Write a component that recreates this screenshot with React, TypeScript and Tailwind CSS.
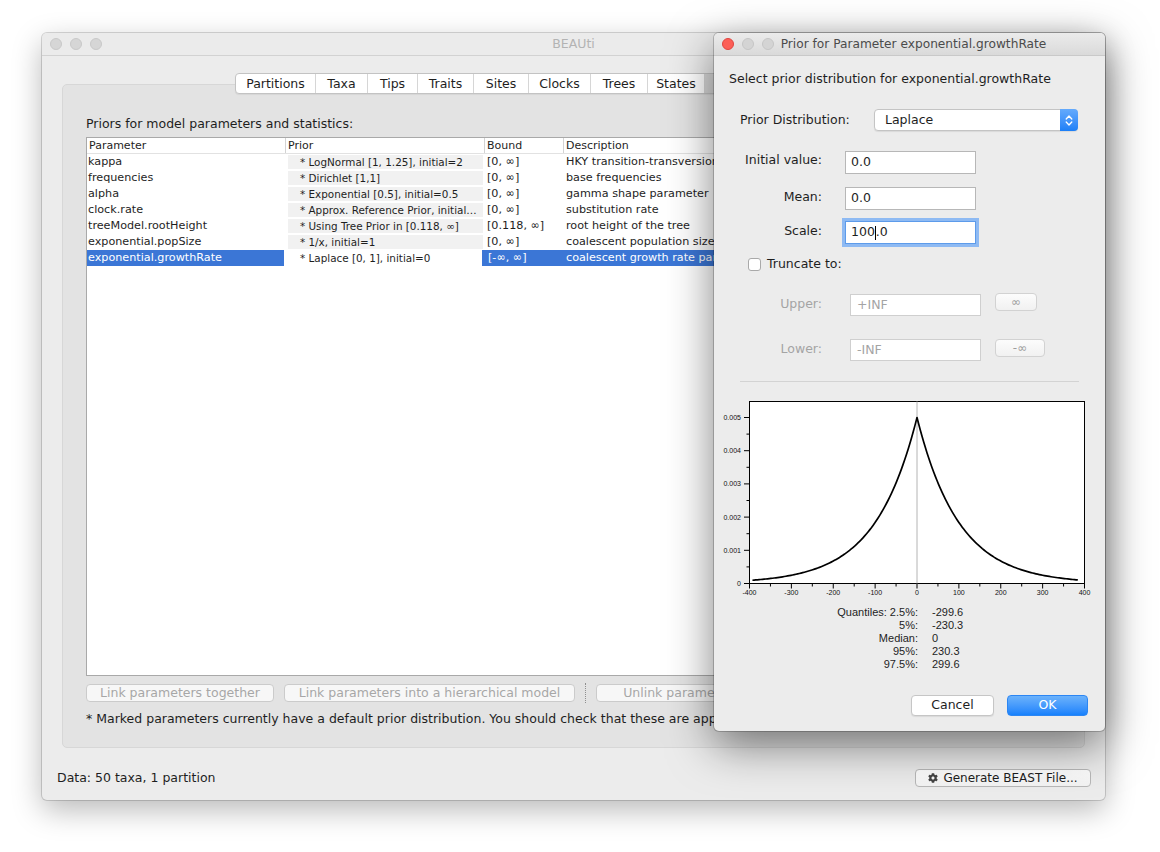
import React from "react";
import { FaCog } from "react-icons/fa";

const rows = [
  { p: "kappa", prior: "* LogNormal [1, 1.25], initial=2", b: "[0, ∞]", d: "HKY transition-transversion parameter" },
  { p: "frequencies", prior: "* Dirichlet [1,1]", b: "[0, ∞]", d: "base frequencies" },
  { p: "alpha", prior: "* Exponential [0.5], initial=0.5", b: "[0, ∞]", d: "gamma shape parameter" },
  { p: "clock.rate", prior: "* Approx. Reference Prior, initial=1", b: "[0, ∞]", d: "substitution rate" },
  { p: "treeModel.rootHeight", prior: "* Using Tree Prior in [0.118, ∞]", b: "[0.118, ∞]", d: "root height of the tree" },
  { p: "exponential.popSize", prior: "* 1/x, initial=1", b: "[0, ∞]", d: "coalescent population size" },
];

const tabs = [
  { t: "Partitions", w: "w-[80px]" },
  { t: "Taxa", w: "w-[52px]" },
  { t: "Tips", w: "w-[50px]" },
  { t: "Traits", w: "w-[56px]" },
  { t: "Sites", w: "w-[55px]" },
  { t: "Clocks", w: "w-[62px]" },
  { t: "Trees", w: "w-[57px]" },
  { t: "States", w: "w-[57px]" },
];

const X = (v: number) => 35.5 + ((v + 400) * 335) / 800;
const Y = (p: number) => 185.5 - p * 33200;

const curve = (() => {
  const pts: string[] = [];
  const vs: number[] = [];
  for (let v = -393; v < 0; v += 4) vs.push(v);
  vs.push(0);
  for (let v = 4; v <= 384; v += 4) vs.push(v);
  vs.forEach((v, i) => {
    const p = 0.005 * Math.exp(-Math.abs(v) / 100);
    pts.push(`${i === 0 ? "M" : "L"}${X(v).toFixed(2)} ${Y(p).toFixed(2)}`);
  });
  return pts.join(" ");
})();

function Light({ cls }: { cls: string }) {
  return <div className={cls} />;
}

function Chart() {
  const xMajor = [-400, -300, -200, -100, 0, 100, 200, 300, 400];
  const xMinor = [-350, -250, -150, -50, 50, 150, 250, 350];
  const yMajor = [0, 0.001, 0.002, 0.003, 0.004, 0.005];
  const yMinor = [0.0005, 0.0015, 0.0025, 0.0035, 0.0045];
  return (
    <svg width="391" height="200" viewBox="0 0 391 200" className="block">
      <rect x="35.5" y="3.5" width="335" height="182" fill="#ffffff" stroke="#000" strokeWidth="1" />
      <line x1={X(0)} y1="3.5" x2={X(0)} y2="185.5" stroke="#b4b4b4" strokeWidth="1" />
      <path d={curve} fill="none" stroke="#000" strokeWidth="1.7" strokeLinejoin="round" />
      {xMajor.map((v) => (
        <g key={v}>
          <line x1={X(v)} y1="185.5" x2={X(v)} y2="190.5" stroke="#000" strokeWidth="1" />
          <text x={X(v)} y="197" textAnchor="middle" fontSize="7" fontFamily="Liberation Sans, Arial, sans-serif" fill="#111">
            {v}
          </text>
        </g>
      ))}
      {xMinor.map((v) => (
        <line key={v} x1={X(v)} y1="185.5" x2={X(v)} y2="188.5" stroke="#000" strokeWidth="1" />
      ))}
      {yMajor.map((p) => (
        <g key={p}>
          <line x1="30" y1={Y(p)} x2="35.5" y2={Y(p)} stroke="#000" strokeWidth="1" />
          <text x="27" y={Y(p) + 2.5} textAnchor="end" fontSize="7" fontFamily="Liberation Sans, Arial, sans-serif" fill="#111">
            {p === 0 ? "0" : p.toFixed(3)}
          </text>
        </g>
      ))}
      {yMinor.map((p) => (
        <line key={p} x1="32.5" y1={Y(p)} x2="35.5" y2={Y(p)} stroke="#000" strokeWidth="1" />
      ))}
    </svg>
  );
}

export default function App() {
  return (
    <div className="relative w-[1160px] h-[852px] bg-white overflow-hidden font-['DejaVu_Sans',sans-serif] text-[#1e1e1e]">
      {/* Main window */}
      <div className="absolute z-0 left-[42px] top-[33px] w-[1063px] h-[767px] bg-[#ececec] rounded-[5px] shadow-[0_10px_30px_rgba(0,0,0,0.28)] ring-1 ring-[#00000026] flex flex-col overflow-hidden">
        <div className="relative h-[23px] shrink-0 flex items-center justify-center bg-[#ebebeb] border-b border-[#d2d2d2]">
          <div className="absolute left-[8px] top-[5px] flex gap-[8px]">
            <Light cls="w-[12px] h-[12px] rounded-full bg-[#d6d6d6] border border-[#c8c8c8]" />
            <Light cls="w-[12px] h-[12px] rounded-full bg-[#d6d6d6] border border-[#c8c8c8]" />
            <Light cls="w-[12px] h-[12px] rounded-full bg-[#d6d6d6] border border-[#c8c8c8]" />
          </div>
          <span className="text-[12.5px] text-[#b3b3b3]">BEAUti</span>
        </div>

        <div className="px-[20px] flex flex-col">
          <div className="relative z-10 mt-[17px] h-[21px] flex pl-[173px]">
            <div className="flex h-full bg-white border border-[#c3c3c3] rounded-[4px] shadow-[0_1px_1px_rgba(0,0,0,0.06)] overflow-hidden">
              {tabs.map((t) => (
                <div
                  key={t.t}
                  className={t.w + " h-full flex items-center justify-center pt-[1px] text-[12.5px] border-r border-[#d6d6d6]"}
                >
                  {t.t}
                </div>
              ))}
              <div className="w-[56px] h-full bg-[#d9d9d9] border-r border-[#c9c9c9]" />
              <div className="w-[132px] h-full" />
            </div>
          </div>

          <div className="-mt-[10px] h-[664px] bg-[#e3e3e3] border border-[#d7d7d7] rounded-[5px] flex flex-col px-[23px] pt-[31px] overflow-hidden">
            <div className="h-[16px] leading-[16px] text-[12.5px] whitespace-nowrap">Priors for model parameters and statistics:</div>
            <div className="mt-[5px] h-[539px] bg-white border border-[#a9a9a9] overflow-hidden">
              <div className="flex h-[16px] border-b border-[#e2e2e2] text-[11px] leading-[15px]">
                <div className="w-[199px] pl-[2px] border-r border-[#d3d3d3]">Parameter</div>
                <div className="w-[199px] pl-[2px] border-r border-[#d3d3d3]">Prior</div>
                <div className="w-[79px] pl-[2px] border-r border-[#d3d3d3]">Bound</div>
                <div className="flex-1 pl-[2px]">Description</div>
              </div>
              {rows.map((r) => (
                <div key={r.p} className="flex h-[16px] leading-[16px] text-[11.2px] whitespace-nowrap">
                  <div className="w-[199px] pl-[1px]">{r.p}</div>
                  <div className="w-[199px] px-[2px] py-[1px]">
                    <div className="h-full bg-[#f1f1f1] pl-[12px] pr-[3px] text-[10.4px] leading-[14px] overflow-hidden text-ellipsis">{r.prior}</div>
                  </div>
                  <div className="w-[79px] pl-[2px]">{r.b}</div>
                  <div className="flex-1 pl-[2px]">{r.d}</div>
                </div>
              ))}
              <div className="flex h-[16px] leading-[16px] text-[11.2px] whitespace-nowrap">
                <div className="w-[197px] mr-[2px] pl-[1px] bg-[#3b76d6] text-white">exponential.growthRate</div>
                <div className="w-[196px] pl-[14px] text-[10.4px] bg-white">* Laplace [0, 1], initial=0</div>
                <div className="flex-1 flex bg-[#3b76d6] text-white">
                  <div className="w-[83px] pl-[6px]">[-∞, ∞]</div>
                  <div className="flex-1 pl-[1px]">coalescent growth rate parameter</div>
                </div>
              </div>
            </div>

            <div className="mt-[8px] h-[18px] flex items-center text-[12.5px] text-[#a7a7a7] whitespace-nowrap">
              <div className="w-[188px] h-[18px] flex items-center justify-center bg-[#f7f7f7] border border-[#cbcbcb] rounded-[4px]">Link parameters together</div>
              <div className="ml-[10px] w-[291px] h-[18px] flex items-center justify-center bg-[#f7f7f7] border border-[#cbcbcb] rounded-[4px]">Link parameters into a hierarchical model</div>
              <div className="ml-[10px] h-[20px] border-l border-dotted border-[#8f8f8f]" />
              <div className="ml-[10px] w-[170px] h-[18px] flex items-center justify-center bg-[#f7f7f7] border border-[#cbcbcb] rounded-[4px]">Unlink parameters</div>
            </div>
            <div className="mt-[10px] h-[14px] leading-[14px] text-[12.5px] whitespace-nowrap">
              * Marked parameters currently have a default prior distribution. You should check that these are appropriate.
            </div>
          </div>
        </div>

        <div className="h-[52px] shrink-0 flex items-center justify-between pl-[15px] pr-[14px] pt-[8px]">
          <span className="text-[12.5px]">Data: 50 taxa, 1 partition</span>
          <div className="w-[176px] h-[18px] flex items-center justify-center gap-[5px] bg-gradient-to-b from-[#ffffff] to-[#f3f3f3] border border-[#b8b8b8] rounded-[4px] text-[12px]">
            <FaCog className="w-[10px] h-[10px] text-[#444]" />
            <span>Generate BEAST File...</span>
          </div>
        </div>
      </div>

      {/* Dialog */}
      <div className="absolute z-10 left-[714px] top-[33px] w-[391px] h-[698px] bg-[#ececec] rounded-[5px] shadow-[0_14px_45px_rgba(0,0,0,0.5)] ring-1 ring-[#00000033] flex flex-col overflow-hidden">
        <div className="relative h-[23px] shrink-0 flex items-center justify-center bg-gradient-to-b from-[#ebebeb] to-[#dadada] border-b border-[#c9c9c9]">
          <div className="absolute left-[8px] top-[5px] flex gap-[8px]">
            <Light cls="w-[12px] h-[12px] rounded-full bg-[#fc5f57] border border-[#df453f]" />
            <Light cls="w-[12px] h-[12px] rounded-full bg-[#d4d4d4] border border-[#c5c5c5]" />
            <Light cls="w-[12px] h-[12px] rounded-full bg-[#d4d4d4] border border-[#c5c5c5]" />
          </div>
          <span className="pl-[8px] text-[12.2px] text-[#4b4b4b] whitespace-nowrap">Prior for Parameter exponential.growthRate</span>
        </div>

        <div className="flex flex-col text-[12.5px]">
          <div className="mt-[15px] pl-[15px] h-[16px] leading-[16px] whitespace-nowrap">Select prior distribution for exponential.growthRate</div>

          <div className="mt-[22px] flex items-center pl-[26px] h-[22px]">
            <div className="w-[134px]">Prior Distribution:</div>
            <div className="relative w-[204px] h-[22px] bg-white border border-[#c4c4c4] rounded-[4px] shadow-[0_1px_1px_rgba(0,0,0,0.08)] flex items-center pl-[10px]">
              Laplace
              <div className="absolute right-[-1px] top-[-1px] bottom-[-1px] w-[18px] rounded-r-[4px] bg-gradient-to-b from-[#64aafc] to-[#1b7ff7] flex items-center justify-center">
                <svg width="8" height="13" viewBox="0 0 8 13">
                  <path d="M1.2 5 L4 2 L6.8 5" fill="none" stroke="#fff" strokeWidth="1.3" strokeLinecap="round" strokeLinejoin="round" />
                  <path d="M1.2 8 L4 11 L6.8 8" fill="none" stroke="#fff" strokeWidth="1.3" strokeLinecap="round" strokeLinejoin="round" />
                </svg>
              </div>
            </div>
          </div>

          <div className="mt-[20px] flex items-center h-[23px]">
            <div className="w-[108px] text-right -mt-[4px]">Initial value:</div>
            <div className="ml-[23px] w-[131px] h-[23px] bg-white border border-[#b7b7b7] flex items-center pl-[5px]">0.0</div>
          </div>
          <div className="mt-[13px] flex items-center h-[23px]">
            <div className="w-[108px] text-right -mt-[2px]">Mean:</div>
            <div className="ml-[23px] w-[131px] h-[23px] bg-white border border-[#b7b7b7] flex items-center pl-[5px]">0.0</div>
          </div>
          <div className="mt-[11px] flex items-center h-[23px]">
            <div className="w-[108px] text-right -mt-[2px]">Scale:</div>
            <div className="ml-[23px] w-[131px] h-[23px] bg-white border border-[#5d9bea] ring-[3px] ring-[#8ebaf3] flex items-center pl-[5px]">
              100<span className="inline-block w-[1px] h-[14px] bg-black" />.0
            </div>
          </div>

          <div className="mt-[14px] flex items-center h-[13px] pl-[34px]">
            <div className="w-[13px] h-[13px] bg-white border border-[#a9a9a9] rounded-[3px]" />
            <span className="ml-[6px]">Truncate to:</span>
          </div>

          <div className="mt-[23px] flex items-start h-[22px] text-[#a4a4a4]">
            <div className="w-[108px] text-right mt-[1px]">Upper:</div>
            <div className="ml-[28px] w-[131px] h-[22px] bg-white border border-[#cfcfcf] flex items-center pl-[6px]">+INF</div>
            <div className="ml-[14px] -mt-[1px] w-[42px] h-[18px] bg-gradient-to-b from-[#fcfcfc] to-[#f1f1f1] border border-[#d2d2d2] rounded-[4px] flex items-center justify-center text-[12px] text-[#9d9d9d]">∞</div>
          </div>
          <div className="mt-[23px] flex items-start h-[22px] text-[#a4a4a4]">
            <div className="w-[108px] text-right mt-[1px]">Lower:</div>
            <div className="ml-[28px] w-[131px] h-[22px] bg-white border border-[#cfcfcf] flex items-center pl-[6px]">-INF</div>
            <div className="ml-[14px] w-[50px] h-[18px] bg-gradient-to-b from-[#fcfcfc] to-[#f1f1f1] border border-[#d2d2d2] rounded-[4px] flex items-center justify-center text-[12px] text-[#9d9d9d]">-∞</div>
          </div>

          <div className="mt-[20px] mx-[26px] h-[1px] bg-[#d3d3d3]" />

          <div className="mt-[16px]">
            <Chart />
          </div>

          <div className="mt-[8px] grid grid-cols-[204px_1fr] font-['Liberation_Sans',sans-serif] text-[11px] leading-[13px]">
            <div className="text-right">Quantiles: 2.5%:</div>
            <div className="pl-[14px]">-299.6</div>
            <div className="text-right">5%:</div>
            <div className="pl-[14px]">-230.3</div>
            <div className="text-right">Median:</div>
            <div className="pl-[14px]">0</div>
            <div className="text-right">95%:</div>
            <div className="pl-[14px]">230.3</div>
            <div className="text-right">97.5%:</div>
            <div className="pl-[14px]">299.6</div>
          </div>

          <div className="mt-[24px] flex justify-end pr-[17px] gap-[13px]">
            <div className="w-[83px] h-[21px] bg-white border border-[#c6c6c6] rounded-[4px] shadow-[0_1px_1px_rgba(0,0,0,0.08)] flex items-center justify-center">Cancel</div>
            <div className="w-[81px] h-[21px] bg-gradient-to-b from-[#6bb2fb] to-[#1581fc] border border-[#2c86f3] rounded-[4px] flex items-center justify-center text-white">OK</div>
          </div>
        </div>
      </div>
    </div>
  );
}
